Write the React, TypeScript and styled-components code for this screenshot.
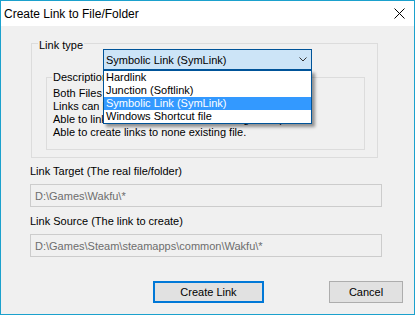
import React from "react";
import styled, { createGlobalStyle } from "styled-components";

const Global = createGlobalStyle`
  html, body { margin: 0; padding: 0; background: #f0f0f0; }
  body { font-family: "Liberation Sans", Arial, sans-serif; font-size: 11px; color: #000; }
  * { box-sizing: border-box; }
`;

const Window = styled.div`
  width: 415px;
  height: 315px;
  border: 1px solid #1ba1cd;
  display: flex;
  flex-direction: column;
  background: #f0f0f0;
  overflow: hidden;
`;

const TitleBar = styled.div`
  height: 25px;
  background: #fff;
  display: flex;
  align-items: center;
  justify-content: space-between;
  padding: 0 9px 0 3px;
  font-size: 12px;
`;

const Body = styled.div`
  flex: 1;
  display: flex;
  flex-direction: column;
  padding: 17px 11px 0 29px;
`;

const GroupBox = styled.div`
  position: relative;
  border: 1px solid #dcdcdc;
  display: flex;
  flex-direction: column;
`;

const OuterGroup = styled(GroupBox)`
  width: 347px;
  height: 115px;
  margin-left: 1px;
  padding: 5px 12px 0 14px;
`;

const InnerGroup = styled(GroupBox)`
  margin-top: 7px;
  height: 73px;
  padding: 9px 6px 0 6px;
`;

const Caption = styled.span<{ $top: number; $left: number }>`
  position: absolute;
  top: ${(p) => p.$top}px;
  left: ${(p) => p.$left}px;
  line-height: 14px;
  padding: 0 1px;
  background: #f0f0f0;
  white-space: nowrap;
`;

const DescLine = styled.div`
  line-height: 13px;
  white-space: nowrap;
`;

const Combo = styled.div`
  position: relative;
  margin-left: 57px;
  width: 209px;
  height: 21px;
  border: 1px solid #005499;
  background: #cce4f7;
  display: flex;
  align-items: center;
  justify-content: space-between;
  padding: 0 4px 0 2px;
  line-height: 14px;
`;

const DropList = styled.div`
  position: absolute;
  top: 20px;
  left: -1px;
  width: 209px;
  background: #fff;
  border: 1px solid #005499;
  box-shadow: 3px 3px 3px rgba(0, 0, 0, 0.4);
  z-index: 2;
`;

const Item = styled.div<{ $selected?: boolean }>`
  height: 13px;
  line-height: 13px;
  padding-left: 2px;
  background: ${(p) => (p.$selected ? "#3399ff" : "transparent")};
  color: ${(p) => (p.$selected ? "#fff" : "#000")};
  white-space: nowrap;
`;

const FieldLabel = styled.div<{ $mt: number }>`
  margin-top: ${(p) => p.$mt}px;
  line-height: 14px;
`;

const Field = styled.div`
  margin-top: 6px;
  width: 352px;
  height: 23px;
  border: 1px solid #cccccc;
  background: #f0f0f0;
  color: #6d6d6d;
  display: flex;
  align-items: center;
  padding-left: 4px;
  white-space: nowrap;
`;

const ButtonRow = styled.div`
  margin-top: 24px;
  display: flex;
  justify-content: flex-end;
  gap: 65px;
`;

const Button = styled.button<{ $w: number; $default?: boolean }>`
  width: ${(p) => p.$w}px;
  height: 22px;
  font: inherit;
  color: #000;
  background: #e1e1e1;
  border: ${(p) => (p.$default ? "2px solid #0078d7" : "1px solid #adadad")};
  padding: 0;
  border-radius: 0;
`;

const Close = () => (
  <svg width="11" height="11" viewBox="0 0 11 11">
    <path d="M0.5 0.5 L10.5 10.5 M10.5 0.5 L0.5 10.5" stroke="#000" strokeWidth="1" fill="none" />
  </svg>
);

const Chevron = () => (
  <svg width="8" height="5" viewBox="0 0 8 5">
    <polyline points="0.5,0.5 4,4 7.5,0.5" stroke="#333" strokeWidth="1" fill="none" />
  </svg>
);

export default function App() {
  return (
    <>
      <Global />
      <Window>
        <TitleBar>
          <span>Create Link to File/Folder</span>
          <Close />
        </TitleBar>
        <Body>
          <OuterGroup>
            <Caption $top={-6} $left={6}>Link type</Caption>
            <Combo>
              <span>Symbolic Link (SymLink)</span>
              <Chevron />
              <DropList>
                <Item>Hardlink</Item>
                <Item>Junction (Softlink)</Item>
                <Item $selected>Symbolic Link (SymLink)</Item>
                <Item>Windows Shortcut file</Item>
              </DropList>
            </Combo>
            <InnerGroup>
              <Caption $top={-8} $left={5}>Description</Caption>
              <DescLine>Both Files and Folders are supported.</DescLine>
              <DescLine>Links can be relative or absolute.</DescLine>
              <DescLine>Able to link to folder on other drive using UNC path.</DescLine>
              <DescLine>Able to create links to none existing file.</DescLine>
            </InnerGroup>
          </OuterGroup>
          <FieldLabel $mt={6}>Link Target (The real file/folder)</FieldLabel>
          <Field>D:\Games\Wakfu\*</Field>
          <FieldLabel $mt={7}>Link Source (The link to create)</FieldLabel>
          <Field>D:\Games\Steam\steamapps\common\Wakfu\*</Field>
          <ButtonRow>
            <Button $w={111} $default>Create Link</Button>
            <Button $w={74}>Cancel</Button>
          </ButtonRow>
        </Body>
      </Window>
    </>
  );
}
